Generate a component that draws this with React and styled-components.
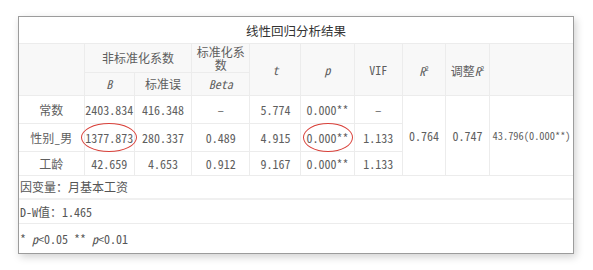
import React from 'react';
import styled, { createGlobalStyle } from 'styled-components';

const GlobalStyle = createGlobalStyle`
  body {
    margin: 0;
    background: #ffffff;
    font-family: "Noto Sans Mono CJK SC", "Noto Sans CJK SC", "Liberation Mono", monospace;
  }
`;

const rows = [
  { name: '常数', b: '2403.834', se: '416.348', beta: '–', t: '5.774', p: '0.000**', vif: '–', h: 28 },
  { name: '性别_男', b: '1377.873', se: '280.337', beta: '0.489', t: '4.915', p: '0.000**', vif: '1.133', h: 28, mark: true },
  { name: '工龄', b: '42.659', se: '4.653', beta: '0.912', t: '9.167', p: '0.000**', vif: '1.133', h: 24 },
];

const widths = [65, 50, 57, 58, 51, 53, 48, 43, 44, 83];

const App = () => {
  return (
    <>
      <GlobalStyle />
      <Page>
        <Card>
          <Table>
            <colgroup>
              {widths.map((w, i) => (
                <col key={i} style={{ width: w }} />
              ))}
            </colgroup>
            <tbody>
              <tr>
                <Title colSpan={10}>线性回归分析结果</Title>
              </tr>
              <HeadRow $h={29}>
                <Head rowSpan={2}></Head>
                <Head colSpan={2}>非标准化系数</Head>
                <Head $tight>标准化系数</Head>
                <Head rowSpan={2}><I>t</I></Head>
                <Head rowSpan={2}><I>p</I></Head>
                <Head rowSpan={2}>VIF</Head>
                <Head rowSpan={2}><I>R</I><Sup>2</Sup></Head>
                <Head rowSpan={2}>调整<I>R</I><Sup>2</Sup></Head>
                <Head rowSpan={2}></Head>
              </HeadRow>
              <HeadRow $h={23}>
                <Head><I>B</I></Head>
                <Head>标准误</Head>
                <Head><I>Beta</I></Head>
              </HeadRow>
              {rows.map((r, i) => (
                <DataRow key={r.name} $h={r.h}>
                  <Cell>{r.name}</Cell>
                  <Cell>
                    {r.mark ? <Marked>{r.b}<Ring /></Marked> : r.b}
                  </Cell>
                  <Cell>{r.se}</Cell>
                  <Cell>{r.beta}</Cell>
                  <Cell>{r.t}</Cell>
                  <Cell>
                    {r.mark ? <Marked>{r.p}<Ring /></Marked> : r.p}
                  </Cell>
                  <Cell>{r.vif}</Cell>
                  {i === 0 && (
                    <>
                      <Cell rowSpan={3}>0.764</Cell>
                      <Cell rowSpan={3}>0.747</Cell>
                      <Cell rowSpan={3} $small>43.796(0.000**)</Cell>
                    </>
                  )}
                </DataRow>
              ))}
              <FootRow $h={23}>
                <Note colSpan={10}>因变量：月基本工资</Note>
              </FootRow>
              <FootRow $h={25} $thick>
                <Note colSpan={10}>D-W值：1.465</Note>
              </FootRow>
              <FootRow $h={29}>
                <Note colSpan={10}>* <I>p</I>&lt;0.05 ** <I>p</I>&lt;0.01</Note>
              </FootRow>
            </tbody>
          </Table>
        </Card>
      </Page>
    </>
  );
};

const Page = styled.div`
  width: 593px;
  height: 270px;
  padding: 16px 0 0 18px;
  box-sizing: border-box;
`;

const Card = styled.div`
  width: 554px;
  border: 1px solid #9c9c9c;
  box-shadow: 2px 3px 8px rgba(0, 0, 0, 0.18);
  background: #fff;
`;

const Table = styled.table`
  width: 100%;
  border-collapse: collapse;
  table-layout: fixed;
  color: #5e5e5e;
  font-size: 12px;
`;

const Title = styled.td`
  height: 26px;
  text-align: center;
  color: #333;
  font-size: 12.5px;
  border-bottom: 1px solid #ececec;
  padding: 0;
`;

const HeadRow = styled.tr`
  height: ${(p) => p.$h}px;
  background: #f8f8f8;
`;

const Head = styled.th`
  font-weight: normal;
  text-align: center;
  border: 1px solid #ececec;
  padding: 0 2px;
  line-height: ${(p) => (p.$tight ? '13px' : '16px')};
  &:first-child { border-left: none; }
  &:last-child { border-right: none; }
`;

const DataRow = styled.tr`
  height: ${(p) => p.$h}px;
`;

const Cell = styled.td`
  text-align: center;
  border: 1px solid #ececec;
  padding: 0;
  white-space: nowrap;
  font-size: ${(p) => (p.$small ? '10.4px' : '12px')};
  &:first-child { border-left: none; }
  &:last-child { border-right: none; }
`;

const FootRow = styled.tr`
  height: ${(p) => p.$h}px;
  border-top: ${(p) => (p.$thick ? '2px solid #f0f0f0' : '1px solid #ececec')};
`;

const Note = styled.td`
  padding: 0 0 0 1px;
  text-align: left;
  color: #555;
`;

const I = styled.i`
  font-style: italic;
`;

const Sup = styled.sup`
  font-size: 7px;
  vertical-align: 5px;
`;

const Marked = styled.span`
  position: relative;
  display: inline-block;
`;

const Ring = styled.span`
  position: absolute;
  left: -4px;
  right: -4px;
  top: -6px;
  bottom: -6px;
  border: 1.5px solid #d9413a;
  border-radius: 50%;
`;

export default App;
